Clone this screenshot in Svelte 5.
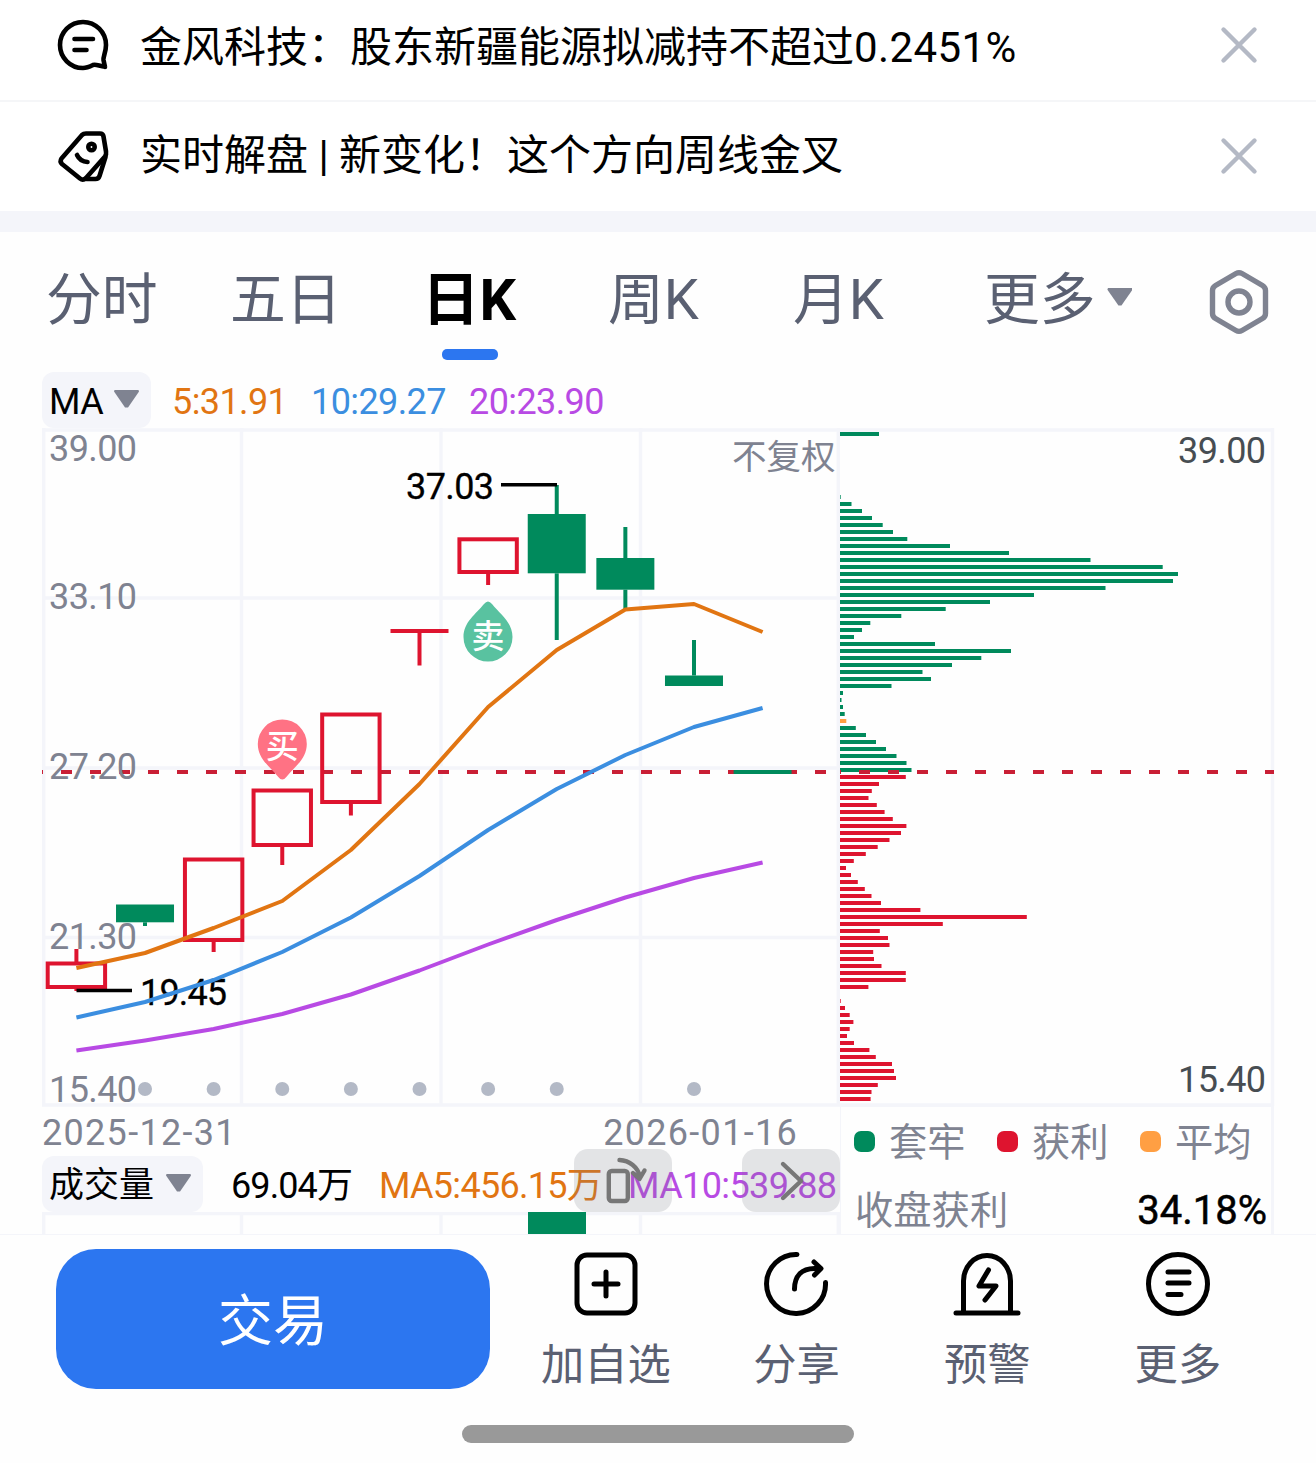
<script lang="ts">
	type Candle = {
		kind: 'up' | 'down';
		top: number;
		bottom: number;
		high?: number;
		low?: number;
	};

	const tabs = ['分时', '五日', '日K', '周K', '月K'];
	let active = $state('日K');

	// All chart values are in canvas units, the canvas starts at y = 428.
	const step = 68.62;
	const cx = (i: number) => 76.4 + step * i;

	const candles: Candle[] = [
		{ kind: 'up', top: 963.5, bottom: 987, high: 949, low: 991 },
		{ kind: 'down', top: 904.5, bottom: 922.3, low: 926 },
		{ kind: 'up', top: 859.5, bottom: 940, low: 952 },
		{ kind: 'up', top: 790.5, bottom: 845, low: 865 },
		{ kind: 'up', top: 714.5, bottom: 802, low: 815.5 },
		{ kind: 'up', top: 631, bottom: 631, low: 665.5 },
		{ kind: 'up', top: 539.3, bottom: 572, low: 585 },
		{ kind: 'down', top: 514, bottom: 573.3, high: 485, low: 640 },
		{ kind: 'down', top: 558, bottom: 589.7, high: 527, low: 609 },
		{ kind: 'down', top: 675.5, bottom: 686, high: 640 },
		{ kind: 'down', top: 770, bottom: 774 },
	];

	const averages = [
		{ name: 'ma5', ys: [968, 953, 928, 901, 850, 784, 707, 650, 609.5, 604, 632] },
		{ name: 'ma10', ys: [1017.5, 1002, 980, 952, 917.5, 876, 830, 789, 755, 727, 708] },
		{ name: 'ma20', ys: [1050.5, 1040.5, 1029, 1014, 994.5, 970.5, 944.5, 920, 897.5, 878, 862.5] },
	];
	const points = (ys: number[]) => ys.map((y, i) => `${cx(i)},${y}`).join(' ');

	const axis = [
		{ label: '39.00', y: 461 },
		{ label: '33.10', y: 609 },
		{ label: '27.20', y: 779 },
		{ label: '21.30', y: 949 },
		{ label: '15.40', y: 1102 },
	];
	const eventDays = [1, 2, 3, 4, 5, 6, 7, 9];

	// Chip distribution, one bar per price level from the top down.
	const chips = [
		39, 0, 0, 0, 0, 0, 0, 0, 0, 0.7, 11.5, 22, 32, 42.7, 53, 67.3, 110, 169, 250.5, 322.7, 338, 333,
		265.5, 194, 150, 105.7, 61.3, 30.3, 22, 14, 95, 171, 141.3, 112, 82.5, 91, 51.5, 3, 1.5, 3, 4.7,
		6.3, 15.8, 26, 36, 46, 56.5, 66.5, 71.5, 65.8, 39, 31.8, 28.5, 36.8, 44.6, 52.8, 66.4, 61, 49.5,
		37.7, 25.8, 13.8, 6, 11, 17.8, 24.8, 31.5, 41, 80.4, 186.8, 102.8, 39.8, 48, 49.5, 33.2, 34,
		41.5, 65.8, 65.8, 28.4, 0, 0.7, 5, 9.7, 13.4, 9.7, 7, 14, 29.4, 35.8, 52, 54, 56, 37.8, 31.5, 30.6,
	];
	const averageLevel = 41;
	const chipKind = (i: number) => (i === averageLevel ? 'avg' : i > 48 ? 'gain' : 'loss');

	const legend = [
		{ label: '套牢', kind: 'loss' },
		{ label: '获利', kind: 'gain' },
		{ label: '平均', kind: 'avg' },
	];
</script>

<main>
	<section class="news">
		<article>
			<svg class="lead" viewBox="56 16 54 56">
				<path d="M105 66l-1.500-7c-.5-3 2.500-8 2.500-15a23 23 0 1 0-23 23c4 0 7-1.500 10-3 3-1 6 1 12 1.800z" />
				<path d="M74.500 38h18.500M74.500 49h12" />
			</svg>
			<p>金风科技：股东新疆能源拟减持不超过<span class="figure">0.2451%</span></p>
			<svg class="close" viewBox="0 0 38 38"><path d="M3.500 3.500l31 31M34.500 3.500l-31 31" /></svg>
		</article>
		<article>
			<svg class="lead" viewBox="56 129 54 56">
				<path d="M82 135q1.500-1.500 4-1.500h14q3 0 3.500 3l2.500 15q.5 3-1 5L86 178q-3 3-6 .5L62 164q-2.500-2.500-.5-5.500z" />
				<path d="M105.500 157l-6 19q-1 3-4 3h-9" />
				<circle cx="91.500" cy="147" r="3.200" />
				<path d="M77 155q3 6.500 10.500 7" />
			</svg>
			<p>实时解盘 | 新变化！这个方向周线金叉</p>
			<svg class="close" viewBox="0 0 38 38"><path d="M3.500 3.500l31 31M34.500 3.500l-31 31" /></svg>
		</article>
	</section>

	<nav>
		{#each tabs as tab}
			<button class:active={active === tab} onclick={() => (active = tab)}><span>{tab}</span></button>
		{/each}
		<button class="more">更多 <i class="caret"></i></button>
		<svg class="gear" viewBox="1206 268 64 68">
			<path d="M1236 273.500q3-1.700 6 0l20.500 12q3 1.800 3 5v23q0 3.200-3 5l-20.500 12q-3 1.700-6 0l-20.500-12q-3-1.800-3-5v-23q0-3.200 3-5z" />
			<circle cx="1239" cy="302" r="11" />
		</svg>
	</nav>

	<div class="indicator">
		<button class="pill">MA <i class="caret"></i></button>
		<span class="ma5">5:31.91</span>
		<span class="ma10">10:29.27</span>
		<span class="ma20">20:23.90</span>
	</div>

	<svg class="chart" viewBox="0 428 1316 678" width="1316" height="678">
		<g class="grid">
			<path d="M42 430H1274M42 598H838M42 768H838M42 937.500H838M42 1105H1274" />
			<path d="M43.700 428V1106M241.500 428V1106M441 428V1106M640.500 428V1106M838.300 428V1106M1272.500 428V1106" />
		</g>

		{#each chips as w, i}
			<rect class={chipKind(i)} x="840" y={432 + i * 7} width={w} height="4" />
		{/each}
		<path class="dash" stroke-dashoffset="10" d="M42 772H840" />
		<path class="dash" stroke-dashoffset="10" d="M840 772H1274" />

		{#each axis as a}
			<text class="axis" x="49" y={a.y} textLength="88">{a.label}</text>
		{/each}
		<text class="axis cjk" x="732" y="469">不复权</text>
		<text class="range" x="1178" y="463" textLength="88">39.00</text>
		<text class="range" x="1178" y="1092" textLength="88">15.40</text>

		{#each eventDays as d}
			<circle class="event" cx={cx(d)} cy="1089" r="7" />
		{/each}

		{#each candles as c, i}
			<g class={c.kind}>
				{#if c.high}<path d="M{cx(i)} {c.high}V{c.top}" />{/if}
				{#if c.low}<path d="M{cx(i)} {c.bottom}V{c.low}" />{/if}
				{#if c.kind === 'down'}
					<rect x={cx(i) - 29} y={c.top} width="58" height={c.bottom - c.top} />
				{:else if c.top === c.bottom}
					<path d="M{cx(i) - 29} {c.top}h58" />
				{:else}
					<rect x={cx(i) - 28.7} y={c.top} width="57.400" height={c.bottom - c.top} />
				{/if}
			</g>
		{/each}

		<path class="callout" d="M501 484.700H557M76.500 990.500H132" />
		<text class="extreme" x="406" y="499" textLength="88">37.03</text>
		<text class="extreme" x="140" y="1005" textLength="87">19.45</text>

		{#each averages as ma}
			<polyline class="line {ma.name}" points={points(ma.ys)} />
		{/each}

		<path class="buy" d="M282.300 779.500q-2 0-4-2.500c-8-10-20.500-18-20.500-33a24.500 24.500 0 0 1 49 0c0 15-12.500 23-20.500 33q-2 2.500-4 2.500z" />
		<text class="mark" x="282.300" y="758">买</text>
		<path class="sell" d="M488 601.500q2 0 4 2.500c8 10 20.500 18 20.500 33a24.500 24.500 0 0 1-49 0c0-15 12.500-23 20.500-33q2-2.500 4-2.500z" />
		<text class="mark" x="488" y="647.500">卖</text>
	</svg>

	<div class="lower">
		<div class="left">
			<div class="dates"><span>2025-12-31</span><span>2026-01-16</span></div>
			<div class="indicator volume">
				<button class="pill">成交量 <i class="caret"></i></button>
				<span class="total">69.04万</span>
				<span class="ma5">MA5:456.15万</span>
				<span class="ma20">MA10:539.88</span>
			</div>
			<svg class="bars" viewBox="0 0 840 22" width="840" height="22">
				<path class="gridline" d="M42 1.500H840M43.700 0V22M241.500 0V22M441 0V22M640.500 0V22M838.300 0V22" />
				<rect class="loss" x="528" y="0" width="58" height="22" />
			</svg>
			<button class="float rotate" aria-label="横屏">
				<svg viewBox="574 1149 98 63">
					<rect x="608.800" y="1171" width="19" height="30" rx="3" />
					<path d="M619.500 1160c10 .5 18.500 7 20.500 17M633 1173l6.500 6 5-8.500" />
				</svg>
			</button>
			<button class="float next" aria-label="下一个">
				<svg viewBox="742 1149 98 63"><path d="M783 1164l18 17-18 17" /></svg>
			</button>
		</div>
		<aside>
			<ul>
				{#each legend as item}
					<li><i class={item.kind}></i>{item.label}</li>
				{/each}
			</ul>
			<div class="profit"><span>收盘获利</span><b>34.18%</b></div>
		</aside>
	</div>

	<footer>
		<div class="actions">
			<button class="trade">交易</button>
			<button class="action">
				<svg viewBox="572 1250 68 68">
					<rect x="577" y="1255" width="58" height="58" rx="10" />
					<path d="M594 1284h24M606 1272v24" />
				</svg>
				加自选
			</button>
			<button class="action">
				<svg viewBox="763 1250 68 68">
					<path d="M797 1254.500a29.500 29.500 0 1 0 28.500 28" />
					<path d="M794.500 1289c0-13 7-20.500 20-20.500h5M814 1262l7 6.500-6.500 6.500" />
				</svg>
				分享
			</button>
			<button class="action">
				<svg viewBox="953 1250 68 68">
					<path d="M963.500 1313v-32a23.500 25.500 0 0 1 47 0v32M956 1313h62" />
					<path d="M988.500 1270l-9.500 16h17l-11 14" />
				</svg>
				预警
			</button>
			<button class="action">
				<svg viewBox="1144 1250 68 68">
					<circle cx="1178" cy="1284" r="29.500" />
					<path d="M1168 1272h21M1168 1283h21M1168 1294.500h13" />
				</svg>
				更多
			</button>
		</div>
		<div class="home"></div>
	</footer>
</main>

<style>
	:global(body) {
		background: #fff;
	}
	main {
		--muted: #7f8391;
		--panel: #f4f5fa;
		--red: #de142f;
		--green: #008a5c;
		width: 1316px;
		height: 1463px;
		overflow: hidden;
		background: #fefefe;
		color: #000;
		font-family: Roboto, 'Noto Sans CJK SC', sans-serif;
		font-size: 36px;
		line-height: 1;
	}
	button {
		margin: 0;
		padding: 0;
		border: none;
		background: none;
		color: inherit;
		font: inherit;
		letter-spacing: inherit;
	}
	svg {
		display: block;
		flex: none;
		fill: none;
		stroke-linecap: round;
		stroke-linejoin: round;
	}

	.news {
		background: #fff;
		border-bottom: 21px solid var(--panel);
	}
	.news article {
		display: flex;
		align-items: center;
		box-sizing: border-box;
		height: 109px;
		padding: 0 58px 0 56px;
	}
	.news article:first-child {
		height: 102px;
		padding-bottom: 10px;
		border-bottom: 2px solid #f5f6f8;
	}
	.news p {
		flex: 1;
		margin: 0 0 2px 30px;
		font-size: 42px;
		line-height: 60px;
		white-space: pre;
	}
	.news article:first-child p {
		margin: 6px 0 0 30px;
	}
	.figure {
		letter-spacing: 0.4px;
	}
	.lead {
		width: 54px;
		height: 56px;
		stroke: #000;
		stroke-width: 4.6;
	}
	.close {
		width: 38px;
		height: 38px;
		stroke: #b4b9c5;
		stroke-width: 4.4;
	}
	.news article:last-child .close {
		margin-bottom: 2px;
	}

	nav {
		display: grid;
		grid-template-columns: 184px 195px 183px 185px 191px 222px 64px;
		align-items: center;
		height: 140px;
		padding-left: 46px;
		font-size: 55.8px;
		color: #5a6072;
	}
	nav button {
		height: 140px;
		padding-bottom: 2px;
		text-align: left;
		white-space: nowrap;
	}
	nav span {
		position: relative;
	}
	nav .active {
		margin-left: -3px;
		color: #000;
		font-size: 57.5px;
		font-weight: 700;
	}
	nav .active span::after {
		content: '';
		position: absolute;
		left: 50%;
		bottom: -26px;
		width: 56px;
		height: 11px;
		margin-left: -27px;
		border-radius: 5px;
		background: #2c76f0;
	}
	.caret {
		display: inline-block;
		width: 25px;
		height: 18px;
		background: var(--muted);
		clip-path: polygon(2% 0, 98% 0, 100% 9%, 56% 97%, 44% 97%, 0 9%);
	}
	.more .caret {
		margin: 0 0 13px -2px;
	}
	.gear {
		width: 64px;
		height: 68px;
		stroke: var(--muted);
		stroke-width: 5.4;
	}

	.indicator {
		display: flex;
		align-items: center;
		height: 56px;
		padding-left: 42px;
		letter-spacing: -0.6px;
		white-space: nowrap;
	}
	.indicator > span {
		padding-top: 4px;
		line-height: 56px;
	}
	.pill {
		display: flex;
		align-items: center;
		justify-content: space-between;
		flex: none;
		box-sizing: border-box;
		width: 109px;
		height: 56px;
		margin-right: 21px;
		padding: 4px 12px 0 7px;
		border-radius: 12px;
		background: var(--panel);
		line-height: 50px;
	}
	.pill .caret {
		margin-bottom: 6px;
	}
	.indicator .ma5 {
		width: 139px;
		color: #e17512;
	}
	.indicator .ma10 {
		width: 158px;
		color: #3b8ee0;
	}
	.indicator .ma20 {
		color: #b84ae4;
	}

	.chart {
		overflow: visible;
	}
	.chart text {
		fill: #000;
		font-size: 36px;
	}
	.grid,
	.gridline {
		stroke: var(--panel);
		stroke-width: 3.4;
		stroke-linecap: butt;
	}
	.loss {
		fill: var(--green);
		background: var(--green);
	}
	.gain {
		fill: var(--red);
		background: var(--red);
	}
	.avg {
		fill: #ff9f43;
		background: #ff9f43;
	}
	.dash {
		stroke: #c91f35;
		stroke-width: 4;
		stroke-linecap: butt;
		stroke-dasharray: 11 18;
	}
	.chart .axis {
		fill: var(--muted);
	}
	.chart .cjk {
		font-size: 34.5px;
	}
	.chart .range {
		fill: #474d52;
	}
	.chart .extreme {
		stroke: #000;
		stroke-width: 0.3;
	}
	.event {
		fill: #b3b9c6;
	}
	.up,
	.down {
		stroke-width: 4;
		stroke-linecap: butt;
		stroke-linejoin: miter;
	}
	.up {
		stroke: var(--red);
	}
	.down {
		stroke: var(--green);
	}
	.down rect {
		fill: var(--green);
		stroke: none;
	}
	.callout {
		stroke: #000;
		stroke-width: 3.6;
		stroke-linecap: butt;
	}
	.line {
		stroke-width: 4;
		stroke-linecap: butt;
	}
	.line.ma5 {
		stroke: #e17512;
	}
	.line.ma10 {
		stroke: #3b8ee0;
	}
	.line.ma20 {
		stroke: #b84ae4;
	}
	.buy {
		fill: #ff7284;
	}
	.sell {
		fill: #59c2a0;
	}
	.chart .mark {
		fill: #fff;
		font-size: 33px;
		font-weight: 500;
		text-anchor: middle;
	}

	.lower {
		display: flex;
		height: 128px;
	}
	.left {
		position: relative;
		width: 840px;
	}
	.dates {
		display: flex;
		justify-content: space-between;
		height: 50px;
		padding: 0 42px 0 42px;
		color: var(--muted);
		line-height: 54px;
		letter-spacing: 1.3px;
	}
	.volume .pill {
		width: 161px;
		margin-right: 28px;
		font-size: 35px;
		letter-spacing: 0;
	}
	.volume .total {
		width: 148px;
		letter-spacing: -0.9px;
	}
	.volume .ma5 {
		width: 249px;
		letter-spacing: -0.7px;
	}
	.volume .ma20 {
		letter-spacing: -0.6px;
	}
	.float {
		position: absolute;
		top: 43px;
		width: 98px;
		height: 63px;
		border-radius: 14px;
		background: rgba(120, 123, 133, 0.2);
	}
	.float svg {
		stroke: #777;
		stroke-width: 4.4;
	}
	.rotate {
		left: 574px;
	}
	.next {
		left: 742px;
	}

	aside {
		box-sizing: border-box;
		width: 434px;
		border: solid var(--panel);
		border-width: 1px 3px 0 1px;
		color: var(--muted);
		font-size: 38.3px;
	}
	ul {
		display: flex;
		margin: 0;
		padding: 0 0 0 13px;
		list-style: none;
	}
	li {
		display: flex;
		align-items: center;
		flex: none;
		width: 143px;
		height: 72px;
		white-space: nowrap;
	}
	li i {
		width: 21px;
		height: 21px;
		margin: 0 14px 3px 0;
		border-radius: 7px;
	}
	.profit {
		display: flex;
		align-items: center;
		justify-content: space-between;
		height: 46px;
		padding: 9px 4px 0 14px;
		line-height: 46px;
	}
	.profit b {
		color: #000;
		font-size: 40px;
		font-weight: 400;
		-webkit-text-stroke: 0.5px #000;
	}

	footer {
		height: 229px;
		border-top: 1px solid var(--panel);
	}
	.actions {
		display: flex;
		height: 154px;
		padding: 14px 0 0 56px;
	}
	.trade {
		width: 434px;
		height: 140px;
		margin-right: 20.5px;
		padding-top: 5px;
		border-radius: 40px;
		background: #2c76f0;
		color: #fff;
		font-size: 55px;
	}
	.action {
		display: flex;
		flex-direction: column;
		align-items: center;
		width: 190.7px;
		padding-top: 1px;
		color: #5a6072;
		font-size: 43.3px;
		line-height: 60px;
	}
	.action svg {
		width: 68px;
		height: 68px;
		margin-bottom: 18px;
		stroke: #000;
		stroke-width: 5;
	}
	.home {
		width: 392px;
		height: 18px;
		margin: 22px auto 0;
		border-radius: 9px;
		background: #999;
	}
</style>
